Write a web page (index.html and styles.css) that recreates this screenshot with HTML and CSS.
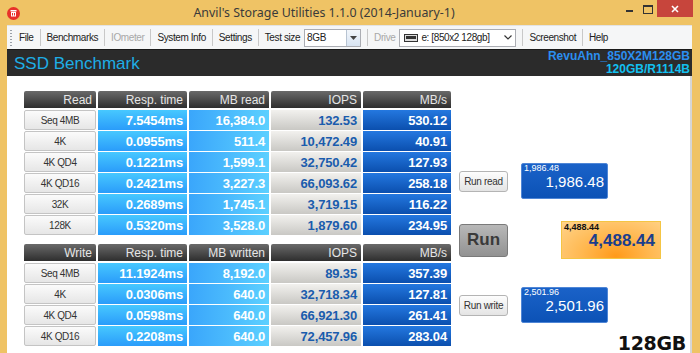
FILE: index.html
```html
<!DOCTYPE html>
<html lang="en">
<head>
    <meta charset="UTF-8">
    <title>Anvil's Storage Utilities</title>
    <link rel="stylesheet" href="styles.css">
</head>
<body>
    <div class="window">
        <!-- Title bar -->
        <div class="titlebar">
            <div class="app-icon">
                <svg width="13" height="13" viewBox="0 0 13 13">
                    <circle cx="6.5" cy="6.5" r="6.5" fill="#e8312a"/>
                    <rect x="3.5" y="3" width="6" height="1.5" fill="#fff"/>
                    <rect x="4" y="5" width="5" height="4.5" fill="#fff"/>
                    <rect x="5" y="6" width="1" height="2.5" fill="#e8312a"/>
                    <rect x="7" y="6" width="1" height="2.5" fill="#e8312a"/>
                </svg>
            </div>
            <div class="title">Anvil's Storage Utilities 1.1.0 (2014-January-1)</div>
            <div class="controls">
                <span class="ctl min"></span>
                <span class="ctl max"></span>
                <span class="ctl close">
                    <svg width="10" height="10" viewBox="0 0 10 10"><path d="M2 2 L8 8 M8 2 L2 8" stroke="#fff" stroke-width="1.6"/></svg>
                </span>
            </div>
        </div>

        <div class="frame">
            <!-- Menu bar -->
            <div class="menubar">
                <span class="grip"></span>
                <span class="item">File</span>
                <span class="sep"></span>
                <span class="item">Benchmarks</span>
                <span class="sep"></span>
                <span class="item disabled">IOmeter</span>
                <span class="sep"></span>
                <span class="item">System Info</span>
                <span class="sep"></span>
                <span class="item">Settings</span>
                <span class="sep"></span>
                <span class="item">Test size</span>
                <span class="combo size-combo">
                    <span class="combo-text">8GB</span>
                    <span class="combo-btn"><svg width="7" height="4" viewBox="0 0 7 4"><path d="M0 0 H7 L3.5 4 Z" fill="#444"/></svg></span>
                </span>
                <span class="sep"></span>
                <span class="item disabled">Drive</span>
                <span class="combo drive-combo">
                    <svg class="drive-icon" width="14" height="8" viewBox="0 0 14 8"><rect x="0.5" y="0.5" width="13" height="7" fill="#ddd" stroke="#333"/><rect x="2" y="2" width="10" height="3" fill="#333"/></svg>
                    <span class="combo-text">e: [850x2 128gb]</span>
                    <svg class="chev" width="8" height="5" viewBox="0 0 8 5"><path d="M0.5 0.5 L4 4 L7.5 0.5" fill="none" stroke="#333" stroke-width="1.2"/></svg>
                </span>
                <span class="sep"></span>
                <span class="item">Screenshot</span>
                <span class="sep"></span>
                <span class="item">Help</span>
            </div>

            <!-- Banner -->
            <div class="banner">
                <div class="banner-title">SSD Benchmark</div>
                <div class="drive-info">
                    <div class="model">RevuAhn_850X2M128GB</div>
                    <div class="fw">120GB/R1114B</div>
                </div>
            </div>

            <!-- Content -->
            <div class="content">
                <div class="tables">
                    <div class="grid">
                        <div class="hd">Read</div>
                        <div class="hd">Resp. time</div>
                        <div class="hd">MB read</div>
                        <div class="hd">IOPS</div>
                        <div class="hd">MB/s</div>

                        <div class="lbl">Seq 4MB</div><div class="resp">7.5454ms</div><div class="mb">16,384.0</div><div class="iops">132.53</div><div class="mbs">530.12</div>
                        <div class="lbl">4K</div><div class="resp">0.0955ms</div><div class="mb">511.4</div><div class="iops">10,472.49</div><div class="mbs">40.91</div>
                        <div class="lbl">4K QD4</div><div class="resp">0.1221ms</div><div class="mb">1,599.1</div><div class="iops">32,750.42</div><div class="mbs">127.93</div>
                        <div class="lbl">4K QD16</div><div class="resp">0.2421ms</div><div class="mb">3,227.3</div><div class="iops">66,093.62</div><div class="mbs">258.18</div>
                        <div class="lbl">32K</div><div class="resp">0.2689ms</div><div class="mb">1,745.1</div><div class="iops">3,719.15</div><div class="mbs">116.22</div>
                        <div class="lbl">128K</div><div class="resp">0.5320ms</div><div class="mb">3,528.0</div><div class="iops">1,879.60</div><div class="mbs">234.95</div>
                    </div>

                    <div class="grid write">
                        <div class="hd">Write</div>
                        <div class="hd">Resp. time</div>
                        <div class="hd">MB written</div>
                        <div class="hd">IOPS</div>
                        <div class="hd">MB/s</div>

                        <div class="lbl">Seq 4MB</div><div class="resp">11.1924ms</div><div class="mb">8,192.0</div><div class="iops">89.35</div><div class="mbs">357.39</div>
                        <div class="lbl">4K</div><div class="resp">0.0306ms</div><div class="mb">640.0</div><div class="iops">32,718.34</div><div class="mbs">127.81</div>
                        <div class="lbl">4K QD4</div><div class="resp">0.0598ms</div><div class="mb">640.0</div><div class="iops">66,921.30</div><div class="mbs">261.41</div>
                        <div class="lbl">4K QD16</div><div class="resp">0.2208ms</div><div class="mb">640.0</div><div class="iops">72,457.96</div><div class="mbs">283.04</div>
                    </div>
                </div>

                <!-- Score panel -->
                <div class="scores">
                    <div class="score-row read-row">
                        <button class="btn small">Run read</button>
                        <div class="score blue">
                            <span class="score-small">1,986.48</span>
                            <span class="score-big">1,986.48</span>
                        </div>
                    </div>
                    <div class="score-row run-row">
                        <button class="btn run">Run</button>
                        <div class="score total">
                            <span class="score-small">4,488.44</span>
                            <span class="score-big">4,488.44</span>
                        </div>
                    </div>
                    <div class="score-row write-row">
                        <button class="btn small">Run write</button>
                        <div class="score blue">
                            <span class="score-small">2,501.96</span>
                            <span class="score-big">2,501.96</span>
                        </div>
                    </div>
                    <div class="capacity">128GB</div>
                </div>
            </div>
        </div>
    </div>
</body>
</html>
```

FILE: styles.css
```css
/* General */
* {
    margin: 0;
    padding: 0;
    box-sizing: border-box;
}

body {
    font-family: 'Liberation Sans', Arial, sans-serif;
    background: #efc365;
    color: #333;
}

.window {
    width: 700px;
    height: 353px;
    overflow: hidden;
    background: #efc365;
}

/* Title bar */
.titlebar {
    height: 25px;
    display: flex;
    align-items: flex-start;
}

.app-icon {
    margin: 6px 0 0 7px;
    width: 13px;
    height: 13px;
}

.title {
    flex: 1;
    text-align: center;
    font-family: 'Noto Sans', sans-serif;
    font-size: 12.4px;
    color: #3a3a3a;
    padding: 4px 0 0 6px;
}

.controls {
    display: flex;
    align-items: flex-start;
    margin-right: 7px;
}

.ctl {
    display: block;
    height: 17px;
}

.ctl.min {
    width: 20px;
    position: relative;
}

.ctl.min::after {
    content: '';
    position: absolute;
    left: 4px;
    top: 10px;
    width: 7px;
    height: 2px;
    background: #333;
}

.ctl.max {
    width: 15px;
    position: relative;
}

.ctl.max::after {
    content: '';
    position: absolute;
    left: 1px;
    top: 5px;
    width: 8px;
    height: 6px;
    border: 1px solid #333;
    border-top-width: 2px;
}

.ctl.close {
    width: 36px;
    background: #c7453c;
    display: flex;
    align-items: center;
    justify-content: center;
}

/* Frame */
.frame {
    margin: 0 8px 0 7px;
}

/* Menu bar */
.menubar {
    height: 24px;
    background: #f5f6f7;
    display: flex;
    align-items: center;
    font-size: 10px;
    color: #222;
    padding-left: 3px;
    border-top: 1px solid #e3e3e3;
}

.grip {
    width: 2px;
    height: 16px;
    margin-right: 7px;
    background: repeating-linear-gradient(to bottom, #9aa0a8 0 1px, transparent 1px 3px);
}

.item {
    letter-spacing: -0.4px;
}

.item.disabled {
    color: #a8a8a8;
}

.sep {
    width: 1px;
    height: 17px;
    background: #c8c8c8;
    margin: 0 6px;
}

.combo {
    height: 18px;
    border: 1px solid #abadb3;
    background: #fff;
    display: flex;
    align-items: center;
    margin-left: 4px;
}

.size-combo {
    width: 57px;
}

.size-combo .combo-text {
    flex: 1;
    padding-left: 2px;
    letter-spacing: -0.3px;
}

.combo-btn {
    width: 14px;
    height: 16px;
    background: linear-gradient(to bottom, #f2f6fb, #d8e4f2);
    border-left: 1px solid #b8c4d2;
    display: flex;
    align-items: center;
    justify-content: center;
}

.drive-combo {
    width: 117px;
    padding: 0 3px 0 4px;
}

.drive-icon {
    margin-right: 3px;
}

.drive-combo .combo-text {
    flex: 1;
    letter-spacing: -0.4px;
}

/* Banner */
.banner {
    height: 27px;
    background: #2b2b2b;
    border-top: 1px solid #1a1a1a;
    display: flex;
    justify-content: space-between;
    align-items: flex-start;
}

.banner-title {
    font-size: 17px;
    color: #1eaee6;
    padding: 4px 0 0 7px;
}

.drive-info {
    text-align: right;
    font-weight: bold;
    font-size: 12px;
    line-height: 13px;
    padding: 0 2px 0 0;
}

.model {
    color: #2b8ff0;
}

.fw {
    color: #12c0f0;
}

/* Content */
.content {
    height: 278px;
    background: #fff;
    border-right: 2px solid #d6d6d6;
    display: flex;
    padding: 15px 0 0 17px;
}

.grid {
    display: grid;
    grid-template-columns: 72px 89px 80px 90px 88px;
    grid-template-rows: 18px;
    grid-auto-rows: 20px;
    column-gap: 2px;
    row-gap: 1px;
}

.grid.write {
    margin-top: 9px;
}

.grid > div {
    display: flex;
    align-items: center;
    justify-content: flex-end;
    padding-right: 4px;
}

.hd {
    background: linear-gradient(to bottom, #6a6a6a, #2e2e2e);
    color: #e6e6e6;
    font-size: 12px;
    margin-bottom: 1px;
    border-radius: 2px 2px 0 0;
}

.grid > .lbl {
    justify-content: center;
    padding: 0;
    background: linear-gradient(to bottom, #fbfbfb, #e6e6e6);
    border: 1px solid #c4c4c4;
    border-radius: 2px;
    font-size: 10px;
    letter-spacing: -0.4px;
    color: #333;
}

.resp, .mb, .iops, .mbs {
    font-weight: bold;
    font-size: 13px;
    letter-spacing: -0.15px;
}

.resp {
    background: linear-gradient(to bottom, #47c8ff, #2a9cfa);
    color: #fff;
}

.mb {
    background: linear-gradient(to right, #3aa6fb, #5cd0ff);
    color: #fff;
}

.iops {
    background: linear-gradient(to bottom, #f2f1ee, #c9c8c4);
    color: #1a5cad;
}

.mbs {
    background: linear-gradient(to bottom, #2478e0, #0b4fae);
    color: #fff;
}

/* Scores */
.scores {
    display: flex;
    flex-direction: column;
    margin-left: 8px;
    padding-top: 72px;
    flex: 1;
}

.score-row {
    display: flex;
    align-items: center;
}

.read-row {
    height: 36px;
}

.run-row {
    height: 38px;
    margin-top: 22px;
}

.write-row {
    height: 36px;
    margin-top: 28px;
}

.btn {
    width: 49px;
    font-family: 'Liberation Sans', Arial, sans-serif;
    border-radius: 3px;
    cursor: pointer;
}

.btn.small {
    height: 21px;
    font-size: 10px;
    letter-spacing: -0.3px;
    color: #333;
    background: linear-gradient(to bottom, #fdfdfd, #e4e4e4);
    border: 1px solid #b4b4b4;
}

.btn.run {
    height: 33px;
    font-size: 17px;
    font-weight: bold;
    color: #3a3a3a;
    background: linear-gradient(to bottom, #b8b8b8, #929292);
    border: 1px solid #7a7a7a;
}

.score {
    display: flex;
    flex-direction: column;
    padding: 0 3px 0 2px;
}

.score.blue {
    width: 87px;
    height: 36px;
    margin-left: 13px;
    background: linear-gradient(to bottom, #1a62c8, #0c52b6);
    border: 1px solid #4f86d6;
    border-radius: 2px;
    color: #fff;
}

.score.total {
    width: 100px;
    height: 38px;
    margin-left: 53px;
    background: radial-gradient(ellipse at 55% 95%, #ff9a1a 0%, #ffb850 45%, #ffd48c 100%);
    border: 1px solid #f4c544;
    color: #1b3e8c;
    padding-right: 5px;
}

.score-small {
    font-size: 9px;
    line-height: 9px;
}

.score.total .score-small {
    color: #111;
    font-weight: bold;
    margin-top: 1px;
}

.score-big {
    text-align: right;
    font-size: 15px;
    line-height: 15px;
    margin-top: 1px;
}

.score.total .score-big {
    font-size: 17px;
    line-height: 17px;
    font-weight: bold;
    margin-top: 0;
}

.capacity {
    align-self: flex-end;
    margin: 9px 4px 0 0;
    font-family: 'DejaVu Sans', sans-serif;
    font-weight: bold;
    font-size: 19px;
    color: #111;
    letter-spacing: -0.3px;
}
```
